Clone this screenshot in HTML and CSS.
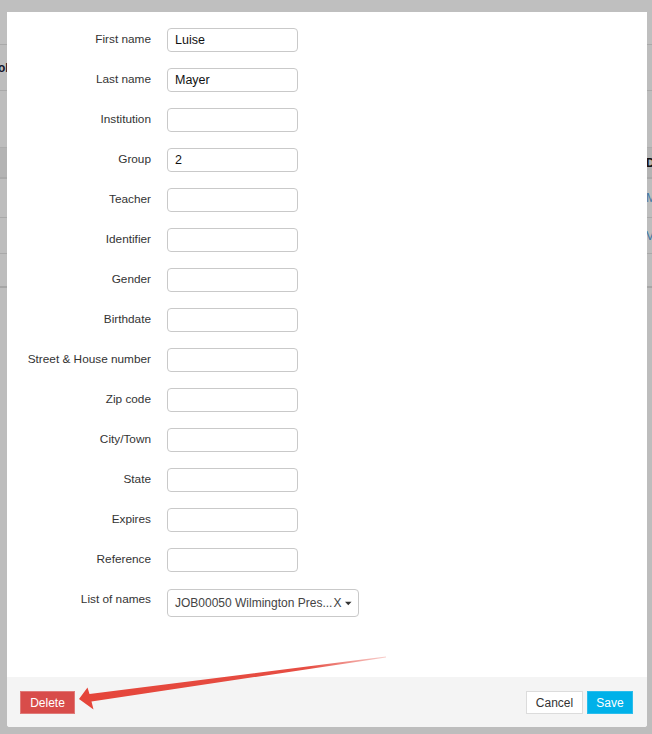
FILE: index.html
```html
<!DOCTYPE html>
<html>
<head>
<meta charset="utf-8">
<link rel="stylesheet" href="styles.css">
</head>
<body>
<div class="page">
  <div class="bg-row h-top"></div>
  <div class="bg-row h-r1"><span class="bg-left">ob</span></div>
  <div class="bg-row h-r2"></div>
  <div class="bg-row h-band"><span class="bg-right dark">Do</span></div>
  <div class="bg-row h-r3"><span class="bg-right link">Mo</span></div>
  <div class="bg-row h-r4"><span class="bg-right link">Vi</span></div>
  <div class="bg-row h-r5"></div>
</div>

<div class="modal">
  <div class="modal-body">
    <div class="form-row"><label>First name</label><input class="field" type="text" value="Luise"></div>
    <div class="form-row"><label>Last name</label><input class="field" type="text" value="Mayer"></div>
    <div class="form-row"><label>Institution</label><input class="field" type="text"></div>
    <div class="form-row"><label>Group</label><input class="field" type="text" value="2"></div>
    <div class="form-row"><label>Teacher</label><input class="field" type="text"></div>
    <div class="form-row"><label>Identifier</label><input class="field" type="text"></div>
    <div class="form-row"><label>Gender</label><input class="field" type="text"></div>
    <div class="form-row"><label>Birthdate</label><input class="field" type="text"></div>
    <div class="form-row"><label>Street &amp; House number</label><input class="field" type="text"></div>
    <div class="form-row"><label>Zip code</label><input class="field" type="text"></div>
    <div class="form-row"><label>City/Town</label><input class="field" type="text"></div>
    <div class="form-row"><label>State</label><input class="field" type="text"></div>
    <div class="form-row"><label>Expires</label><input class="field" type="text"></div>
    <div class="form-row"><label>Reference</label><input class="field" type="text"></div>
    <div class="form-row"><label>List of names</label>
      <div class="select">
        <span class="select-text">JOB00050 Wilmington Pres...</span>
        <span class="select-clear">X</span>
        <svg class="caret" width="9" height="5" viewBox="0 0 9 5"><path d="M0 0 L9 0 L4.5 5 Z" fill="#333"/></svg>
      </div>
    </div>
  </div>
  <div class="modal-footer">
    <button class="btn btn-delete">Delete</button>
    <div class="footer-right">
      <button class="btn btn-cancel">Cancel</button>
      <button class="btn btn-save">Save</button>
    </div>
  </div>
</div>

<svg class="arrow" width="652" height="734" viewBox="0 0 652 734">
  <defs>
    <linearGradient id="fade" x1="79" y1="699" x2="386" y2="657" gradientUnits="userSpaceOnUse">
      <stop offset="0" stop-color="#e5453a" stop-opacity="1"/>
      <stop offset="0.75" stop-color="#e5453a" stop-opacity="0.95"/>
      <stop offset="1" stop-color="#e5453a" stop-opacity="0.25"/>
    </linearGradient>
  </defs>
  <polygon points="79,699 87.5,687.5 89.5,694 386,656.4 386,657.4 91.5,701.5 93.5,709.5" fill="url(#fade)"/>
</svg>
</body>
</html>
```

FILE: styles.css
```css
html, body {
  margin: 0;
  padding: 0;
}
body {
  width: 652px;
  height: 734px;
  overflow: hidden;
  position: relative;
  background: #bdbdbd;
  font-family: "Liberation Sans", Arial, sans-serif;
  font-size: 12px;
}

/* background page (dimmed) */
.page {
  display: flex;
  flex-direction: column;
}
.bg-row {
  display: flex;
  align-items: center;
  border-bottom: 1px solid #a9a9a9;
  box-sizing: border-box;
  overflow: hidden;
  white-space: nowrap;
}
.h-top { height: 45px; background: #bfbfbf; }
.h-r1 { height: 46px; }
.h-r2 { height: 57px; border-bottom: 1px solid #acacac; }
.h-band { height: 31px; background: #b3b3b3; border-bottom: 2px solid #a9a9a9; }
.h-r3 { height: 39px; }
.h-r4 { height: 36px; }
.h-r5 { height: 34px; border-bottom: 2px solid #a6a6a6; }
.bg-left {
  margin-left: -2px;
  font-weight: bold;
  color: #14142a;
  font-size: 12px;
}
.bg-right {
  margin-left: auto;
  width: 6px;
  overflow: hidden;
  font-size: 12px;
}
.bg-right.dark { color: #111; font-weight: bold; }
.bg-right.link { color: #3d76a3; }

/* modal */
.modal {
  position: absolute;
  left: 7px;
  top: 12px;
  width: 640px;
  height: 715px;
  background: #fff;
  display: flex;
  flex-direction: column;
  border-radius: 0 0 3px 3px;
  overflow: hidden;
}
.modal-body {
  flex: 1;
  padding-top: 16px;
  display: flex;
  flex-direction: column;
  gap: 16px;
}
.form-row {
  display: grid;
  grid-template-columns: 144px auto;
  column-gap: 16px;
  align-items: start;
}
.form-row label {
  text-align: right;
  color: #333;
  line-height: 23px;
  white-space: nowrap;
  font-size: 11.8px;
}
.field {
  width: 131px;
  height: 24px;
  box-sizing: border-box;
  border: 1px solid #c9c9c9;
  border-radius: 4px;
  padding: 0 7px;
  font-family: "Liberation Sans", Arial, sans-serif;
  font-size: 12.5px;
  color: #111;
  background: #fff;
  margin: 0;
  outline: none;
}
.select {
  width: 192px;
  height: 28px;
  box-sizing: border-box;
  border: 1px solid #c9c9c9;
  border-radius: 4px;
  display: flex;
  align-items: center;
  padding: 0 6px 0 7px;
  color: #444;
  margin-top: 1px;
}
.select-text {
  font-size: 12px;
  white-space: nowrap;
}
.select-clear {
  font-size: 12px;
  color: #444;
  margin-left: 1px;
}
.caret {
  margin-left: 4px;
}

.modal-footer {
  height: 50px;
  background: #f4f4f4;
  display: flex;
  align-items: flex-start;
  justify-content: space-between;
  padding: 14px 14px 0 13px;
  box-sizing: border-box;
}
.footer-right {
  display: flex;
  gap: 4px;
}
.btn {
  height: 23px;
  box-sizing: border-box;
  font-family: "Liberation Sans", Arial, sans-serif;
  font-size: 12px;
  border-radius: 0;
  padding: 0;
  margin: 0;
  cursor: pointer;
}
.btn-delete {
  width: 55px;
  background: #d84c4a;
  color: #fff;
  border: 1px solid #e07a78;
}
.btn-cancel {
  width: 57px;
  background: #fff;
  color: #333;
  border: 1px solid #dcdcdc;
}
.btn-save {
  width: 46px;
  background: #00b1e9;
  color: #fff;
  border: 1px solid #2bbdec;
}

.arrow {
  position: absolute;
  left: 0;
  top: 0;
  pointer-events: none;
}
```
